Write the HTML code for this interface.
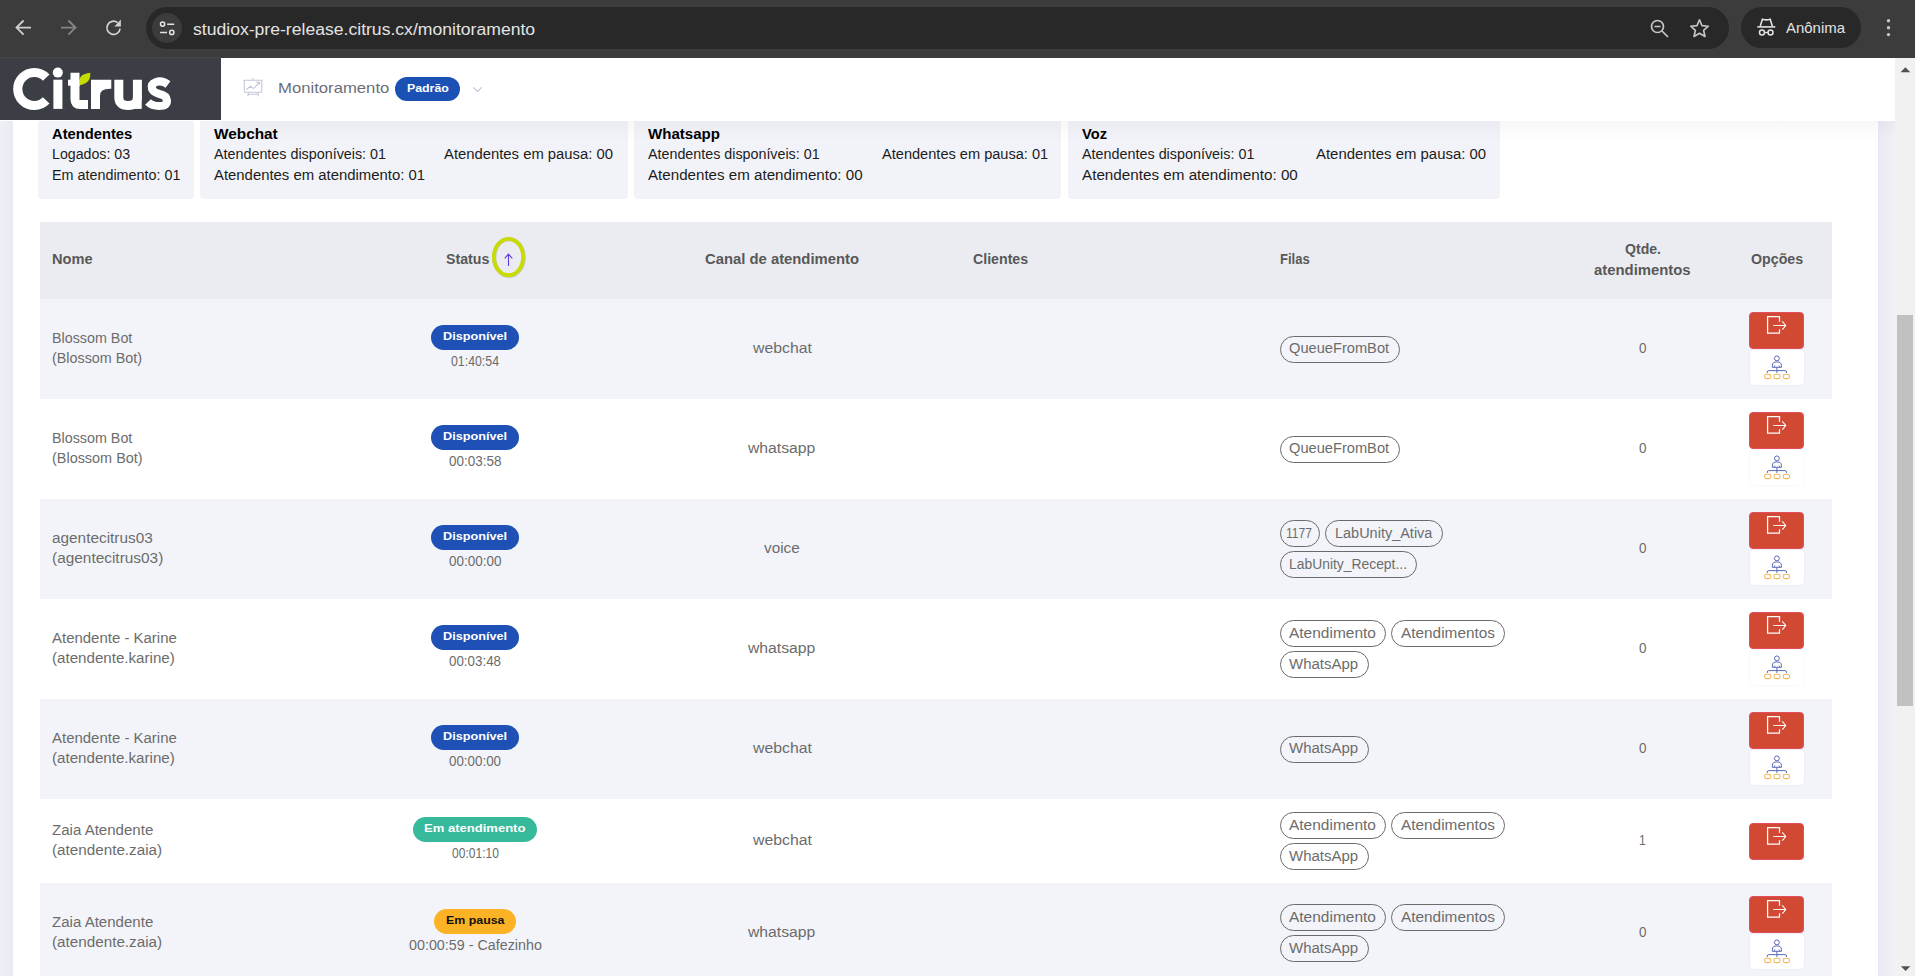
<!DOCTYPE html><html><head><meta charset="utf-8"><style>
*{margin:0;padding:0;box-sizing:border-box}
html,body{width:1915px;height:976px;overflow:hidden;background:#fff;font-family:"Liberation Sans",sans-serif}
body>div,#root div{position:absolute}
.t{white-space:nowrap;transform-origin:0 0}
svg{position:absolute;overflow:visible}

</style></head><body>
<div style="left:0px;top:58px;width:1895px;height:918px;background:#fff;"></div>
<div style="left:0px;top:121px;width:13px;height:855px;background:linear-gradient(90deg,#efeff7,#e9e9f3);"></div>
<div style="left:1878px;top:121px;width:17px;height:855px;background:linear-gradient(90deg,#e9e9f4,#f1f1f6);"></div>
<div style="left:38px;top:100px;width:156px;height:99px;background:#f2f3f8;border-radius:4px"></div>
<div style="left:200px;top:100px;width:428px;height:99px;background:#f2f3f8;border-radius:4px"></div>
<div style="left:634px;top:100px;width:427px;height:99px;background:#f2f3f8;border-radius:4px"></div>
<div style="left:1068px;top:100px;width:432px;height:99px;background:#f2f3f8;border-radius:4px"></div>
<div class="t" style="left:51.60px;top:127.30px;font-size:14px;line-height:14px;font-weight:700;color:#000;transform:scaleX(1.0521);">Atendentes</div>
<div class="t" style="left:51.60px;top:147.20px;font-size:14px;line-height:14px;font-weight:400;color:#1c1c1c;transform:scaleX(1.0134);">Logados: 03</div>
<div class="t" style="left:51.60px;top:168.30px;font-size:14px;line-height:14px;font-weight:400;color:#1c1c1c;transform:scaleX(1.0247);">Em atendimento: 01</div>
<div class="t" style="left:214.00px;top:127.30px;font-size:14px;line-height:14px;font-weight:700;color:#000;transform:scaleX(1.0966);">Webchat</div>
<div class="t" style="left:214.00px;top:147.20px;font-size:14px;line-height:14px;font-weight:400;color:#1c1c1c;transform:scaleX(1.0231);">Atendentes disponíveis: 01</div>
<div class="t" style="left:444.00px;top:147.20px;font-size:14px;line-height:14px;font-weight:400;color:#1c1c1c;transform:scaleX(1.0592);">Atendentes em pausa: 00</div>
<div class="t" style="left:214.00px;top:168.30px;font-size:14px;line-height:14px;font-weight:400;color:#1c1c1c;transform:scaleX(1.0632);">Atendentes em atendimento: 01</div>
<div class="t" style="left:648.40px;top:127.30px;font-size:14px;line-height:14px;font-weight:700;color:#000;transform:scaleX(1.0749);">Whatsapp</div>
<div class="t" style="left:648.40px;top:147.20px;font-size:14px;line-height:14px;font-weight:400;color:#1c1c1c;transform:scaleX(1.0207);">Atendentes disponíveis: 01</div>
<div class="t" style="left:881.60px;top:147.20px;font-size:14px;line-height:14px;font-weight:400;color:#1c1c1c;transform:scaleX(1.0416);">Atendentes em pausa: 01</div>
<div class="t" style="left:648.40px;top:168.30px;font-size:14px;line-height:14px;font-weight:400;color:#1c1c1c;transform:scaleX(1.0813);">Atendentes em atendimento: 00</div>
<div class="t" style="left:1081.60px;top:127.30px;font-size:14px;line-height:14px;font-weight:700;color:#000;transform:scaleX(1.0480);">Voz</div>
<div class="t" style="left:1081.60px;top:147.20px;font-size:14px;line-height:14px;font-weight:400;color:#1c1c1c;transform:scaleX(1.0255);">Atendentes disponíveis: 01</div>
<div class="t" style="left:1315.80px;top:147.20px;font-size:14px;line-height:14px;font-weight:400;color:#1c1c1c;transform:scaleX(1.0661);">Atendentes em pausa: 00</div>
<div class="t" style="left:1081.60px;top:168.30px;font-size:14px;line-height:14px;font-weight:400;color:#1c1c1c;transform:scaleX(1.0874);">Atendentes em atendimento: 00</div>
<div style="left:40px;top:222px;width:1792px;height:77px;background:#ebecf1;"></div>
<div class="t" style="left:51.60px;top:252.30px;font-size:14px;line-height:14px;font-weight:700;color:#585858;transform:scaleX(1.0439);">Nome</div>
<div class="t" style="left:445.70px;top:252.30px;font-size:14px;line-height:14px;font-weight:700;color:#585858;transform:scaleX(1.0121);">Status</div>
<div class="t" style="left:705.00px;top:252.30px;font-size:14px;line-height:14px;font-weight:700;color:#585858;transform:scaleX(1.0586);">Canal de atendimento</div>
<div class="t" style="left:972.60px;top:252.30px;font-size:14px;line-height:14px;font-weight:700;color:#585858;transform:scaleX(1.0118);">Clientes</div>
<div class="t" style="left:1280.00px;top:252.30px;font-size:14px;line-height:14px;font-weight:700;color:#585858;transform:scaleX(0.9340);">Filas</div>
<div class="t" style="left:1625.00px;top:241.70px;font-size:14px;line-height:14px;font-weight:700;color:#585858;transform:scaleX(1.0060);">Qtde.</div>
<div class="t" style="left:1594.40px;top:263.20px;font-size:14px;line-height:14px;font-weight:700;color:#585858;transform:scaleX(1.0614);">atendimentos</div>
<div class="t" style="left:1750.80px;top:251.70px;font-size:14px;line-height:14px;font-weight:700;color:#585858;transform:scaleX(1.0146);">Opções</div>
<svg style="left:490px;top:235px" width="38" height="44" viewBox="0 0 38 44"><ellipse cx="18.9" cy="22.4" rx="14.7" ry="18.3" fill="none" stroke="#6f7500" stroke-opacity=".28" stroke-width="4.4"/><ellipse cx="18.5" cy="22" rx="14.6" ry="18.2" fill="none" stroke="#c9dc00" stroke-width="3.7"/><path d="M18.5 31V19.5M14.7 23.3l3.8-4.2 3.8 4.2" fill="none" stroke="#5b3fd6" stroke-width="1.1"/></svg>
<div style="left:40px;top:299px;width:1792px;height:100px;background:#f3f4f9;"></div>
<div class="t" style="left:51.70px;top:331.00px;font-size:14px;line-height:14px;font-weight:400;color:#6c6c6c;transform:scaleX(1.0219);">Blossom Bot</div>
<div class="t" style="left:51.70px;top:351.00px;font-size:14px;line-height:14px;font-weight:400;color:#6c6c6c;transform:scaleX(1.0250);">(Blossom Bot)</div>
<div style="left:431px;top:325.0px;width:88px;height:25px;background:#1f50b5;border-radius:13px"></div>
<div class="t" style="left:443.00px;top:331.30px;font-size:11px;line-height:11px;font-weight:700;color:#fff;transform:scaleX(1.1505);">Disponível</div>
<div class="t" style="left:451.00px;top:354.40px;font-size:14px;line-height:14px;font-weight:400;color:#6c6c6c;transform:scaleX(0.8807);">01:40:54</div>
<div class="t" style="left:752.53px;top:340.70px;font-size:14px;line-height:14px;font-weight:400;color:#6c6c6c;transform:scaleX(1.1307);">webchat</div>
<div style="left:1280px;top:335.5px;width:120.0px;height:27px;border:1px solid #6a6a6a;border-radius:14px"></div>
<div class="t" style="left:1289.30px;top:341.00px;font-size:14px;line-height:14px;font-weight:400;color:#6c6c6c;transform:scaleX(1.0459);">QueueFromBot</div>
<div class="t" style="left:1639.30px;top:341.40px;font-size:14px;line-height:14px;font-weight:400;color:#6c6c6c;transform:scaleX(0.9635);">0</div>
<div style="left:1749px;top:312.0px;width:55px;height:37px;background:#d14933;border-radius:4px;border:1px solid #e24c5e"></div>
<svg style="left:1749px;top:312.0px" width="55" height="37" viewBox="0 0 55 37"><path d="M30.5 9.8V4.6H18.6V21.2H30.5V17.2" fill="none" stroke="#fff" stroke-width="1.25"/><path d="M24.3 13.5H36.6M33.2 9.3Q35.4 11.4 36.7 13.5Q35.4 15.6 33.2 17.7" fill="none" stroke="#fff" stroke-width="1.1"/></svg>
<div style="left:1750px;top:350.0px;width:54px;height:35px;background:#fff;border-radius:4px;box-shadow:0 0 1.5px rgba(0,0,0,.12)"></div>
<svg style="left:1750px;top:350.0px" width="54" height="35" viewBox="0 0 54 35"><circle cx="26.9" cy="8.4" r="2.45" fill="none" stroke="#5a69b6" stroke-width="1"/><path d="M22.4 17.3V15.2Q22.4 11.9 26.9 11.9Q31.4 11.9 31.4 15.2V17.3Z" fill="none" stroke="#5a69b6" stroke-width="1" stroke-linejoin="round"/><path d="M24 17.2L24.9 15.6M29.8 17.2L28.9 15.6" fill="none" stroke="#5a69b6" stroke-width="1"/><path d="M26.9 17.3V23M17.3 23V22.1Q17.3 20.6 18.8 20.6H35Q36.5 20.6 36.5 22.1V23" fill="none" stroke="#5a69b6" stroke-width="1"/><rect x="14.6" y="24.2" width="6.2" height="4.4" rx="1.9" fill="none" stroke="#f1b65a" stroke-width="1.05"/><rect x="23.9" y="24.2" width="6.2" height="4.4" rx="1.9" fill="none" stroke="#f1b65a" stroke-width="1.05"/><rect x="33.3" y="24.2" width="6.2" height="4.4" rx="1.9" fill="none" stroke="#f1b65a" stroke-width="1.05"/></svg>
<div class="t" style="left:51.70px;top:431.00px;font-size:14px;line-height:14px;font-weight:400;color:#6c6c6c;transform:scaleX(1.0219);">Blossom Bot</div>
<div class="t" style="left:51.70px;top:451.00px;font-size:14px;line-height:14px;font-weight:400;color:#6c6c6c;transform:scaleX(1.0306);">(Blossom Bot)</div>
<div style="left:431px;top:425.0px;width:88px;height:25px;background:#1f50b5;border-radius:13px"></div>
<div class="t" style="left:443.00px;top:431.30px;font-size:11px;line-height:11px;font-weight:700;color:#fff;transform:scaleX(1.1505);">Disponível</div>
<div class="t" style="left:448.60px;top:454.40px;font-size:14px;line-height:14px;font-weight:400;color:#6c6c6c;transform:scaleX(0.9614);">00:03:58</div>
<div class="t" style="left:748.03px;top:440.70px;font-size:14px;line-height:14px;font-weight:400;color:#6c6c6c;transform:scaleX(1.1240);">whatsapp</div>
<div style="left:1280px;top:435.5px;width:120.0px;height:27px;border:1px solid #6a6a6a;border-radius:14px"></div>
<div class="t" style="left:1289.30px;top:441.00px;font-size:14px;line-height:14px;font-weight:400;color:#6c6c6c;transform:scaleX(1.0459);">QueueFromBot</div>
<div class="t" style="left:1639.30px;top:441.40px;font-size:14px;line-height:14px;font-weight:400;color:#6c6c6c;transform:scaleX(0.9635);">0</div>
<div style="left:1749px;top:412.0px;width:55px;height:37px;background:#d14933;border-radius:4px;border:1px solid #e24c5e"></div>
<svg style="left:1749px;top:412.0px" width="55" height="37" viewBox="0 0 55 37"><path d="M30.5 9.8V4.6H18.6V21.2H30.5V17.2" fill="none" stroke="#fff" stroke-width="1.25"/><path d="M24.3 13.5H36.6M33.2 9.3Q35.4 11.4 36.7 13.5Q35.4 15.6 33.2 17.7" fill="none" stroke="#fff" stroke-width="1.1"/></svg>
<div style="left:1750px;top:450.0px;width:54px;height:35px;background:#fff;border-radius:4px;box-shadow:0 0 1.5px rgba(0,0,0,.12)"></div>
<svg style="left:1750px;top:450.0px" width="54" height="35" viewBox="0 0 54 35"><circle cx="26.9" cy="8.4" r="2.45" fill="none" stroke="#5a69b6" stroke-width="1"/><path d="M22.4 17.3V15.2Q22.4 11.9 26.9 11.9Q31.4 11.9 31.4 15.2V17.3Z" fill="none" stroke="#5a69b6" stroke-width="1" stroke-linejoin="round"/><path d="M24 17.2L24.9 15.6M29.8 17.2L28.9 15.6" fill="none" stroke="#5a69b6" stroke-width="1"/><path d="M26.9 17.3V23M17.3 23V22.1Q17.3 20.6 18.8 20.6H35Q36.5 20.6 36.5 22.1V23" fill="none" stroke="#5a69b6" stroke-width="1"/><rect x="14.6" y="24.2" width="6.2" height="4.4" rx="1.9" fill="none" stroke="#f1b65a" stroke-width="1.05"/><rect x="23.9" y="24.2" width="6.2" height="4.4" rx="1.9" fill="none" stroke="#f1b65a" stroke-width="1.05"/><rect x="33.3" y="24.2" width="6.2" height="4.4" rx="1.9" fill="none" stroke="#f1b65a" stroke-width="1.05"/></svg>
<div style="left:40px;top:499px;width:1792px;height:100px;background:#f3f4f9;"></div>
<div class="t" style="left:51.70px;top:531.00px;font-size:14px;line-height:14px;font-weight:400;color:#6c6c6c;transform:scaleX(1.0965);">agentecitrus03</div>
<div class="t" style="left:51.70px;top:551.00px;font-size:14px;line-height:14px;font-weight:400;color:#6c6c6c;transform:scaleX(1.1002);">(agentecitrus03)</div>
<div style="left:431px;top:525.0px;width:88px;height:25px;background:#1f50b5;border-radius:13px"></div>
<div class="t" style="left:443.00px;top:531.30px;font-size:11px;line-height:11px;font-weight:700;color:#fff;transform:scaleX(1.1505);">Disponível</div>
<div class="t" style="left:448.80px;top:554.40px;font-size:14px;line-height:14px;font-weight:400;color:#6c6c6c;transform:scaleX(0.9633);">00:00:00</div>
<div class="t" style="left:764.00px;top:540.70px;font-size:14px;line-height:14px;font-weight:400;color:#6c6c6c;transform:scaleX(1.0956);">voice</div>
<div style="left:1280px;top:520.0px;width:39.8px;height:27px;border:1px solid #6a6a6a;border-radius:14px"></div>
<div class="t" style="left:1286.31px;top:525.50px;font-size:14px;line-height:14px;font-weight:400;color:#6c6c6c;transform:scaleX(0.8600);">1177</div>
<div style="left:1325px;top:520.0px;width:118.0px;height:27px;border:1px solid #6a6a6a;border-radius:14px"></div>
<div class="t" style="left:1334.80px;top:525.50px;font-size:14px;line-height:14px;font-weight:400;color:#6c6c6c;transform:scaleX(1.0342);">LabUnity_Ativa</div>
<div style="left:1280px;top:551.0px;width:136.6px;height:27px;border:1px solid #6a6a6a;border-radius:14px"></div>
<div class="t" style="left:1289.00px;top:556.50px;font-size:14px;line-height:14px;font-weight:400;color:#6c6c6c;transform:scaleX(0.9910);">LabUnity_Recept...</div>
<div class="t" style="left:1639.30px;top:541.40px;font-size:14px;line-height:14px;font-weight:400;color:#6c6c6c;transform:scaleX(0.9635);">0</div>
<div style="left:1749px;top:512.0px;width:55px;height:37px;background:#d14933;border-radius:4px;border:1px solid #e24c5e"></div>
<svg style="left:1749px;top:512.0px" width="55" height="37" viewBox="0 0 55 37"><path d="M30.5 9.8V4.6H18.6V21.2H30.5V17.2" fill="none" stroke="#fff" stroke-width="1.25"/><path d="M24.3 13.5H36.6M33.2 9.3Q35.4 11.4 36.7 13.5Q35.4 15.6 33.2 17.7" fill="none" stroke="#fff" stroke-width="1.1"/></svg>
<div style="left:1750px;top:550.0px;width:54px;height:35px;background:#fff;border-radius:4px;box-shadow:0 0 1.5px rgba(0,0,0,.12)"></div>
<svg style="left:1750px;top:550.0px" width="54" height="35" viewBox="0 0 54 35"><circle cx="26.9" cy="8.4" r="2.45" fill="none" stroke="#5a69b6" stroke-width="1"/><path d="M22.4 17.3V15.2Q22.4 11.9 26.9 11.9Q31.4 11.9 31.4 15.2V17.3Z" fill="none" stroke="#5a69b6" stroke-width="1" stroke-linejoin="round"/><path d="M24 17.2L24.9 15.6M29.8 17.2L28.9 15.6" fill="none" stroke="#5a69b6" stroke-width="1"/><path d="M26.9 17.3V23M17.3 23V22.1Q17.3 20.6 18.8 20.6H35Q36.5 20.6 36.5 22.1V23" fill="none" stroke="#5a69b6" stroke-width="1"/><rect x="14.6" y="24.2" width="6.2" height="4.4" rx="1.9" fill="none" stroke="#f1b65a" stroke-width="1.05"/><rect x="23.9" y="24.2" width="6.2" height="4.4" rx="1.9" fill="none" stroke="#f1b65a" stroke-width="1.05"/><rect x="33.3" y="24.2" width="6.2" height="4.4" rx="1.9" fill="none" stroke="#f1b65a" stroke-width="1.05"/></svg>
<div class="t" style="left:51.70px;top:631.00px;font-size:14px;line-height:14px;font-weight:400;color:#6c6c6c;transform:scaleX(1.0690);">Atendente - Karine</div>
<div class="t" style="left:51.70px;top:651.00px;font-size:14px;line-height:14px;font-weight:400;color:#6c6c6c;transform:scaleX(1.0808);">(atendente.karine)</div>
<div style="left:431px;top:625.0px;width:88px;height:25px;background:#1f50b5;border-radius:13px"></div>
<div class="t" style="left:443.00px;top:631.30px;font-size:11px;line-height:11px;font-weight:700;color:#fff;transform:scaleX(1.1505);">Disponível</div>
<div class="t" style="left:449.00px;top:654.40px;font-size:14px;line-height:14px;font-weight:400;color:#6c6c6c;transform:scaleX(0.9541);">00:03:48</div>
<div class="t" style="left:748.03px;top:640.70px;font-size:14px;line-height:14px;font-weight:400;color:#6c6c6c;transform:scaleX(1.1240);">whatsapp</div>
<div style="left:1280px;top:620.0px;width:106.3px;height:27px;border:1px solid #6a6a6a;border-radius:14px"></div>
<div class="t" style="left:1289.40px;top:625.50px;font-size:14px;line-height:14px;font-weight:400;color:#6c6c6c;transform:scaleX(1.1055);">Atendimento</div>
<div style="left:1391.3px;top:620.0px;width:113.3px;height:27px;border:1px solid #6a6a6a;border-radius:14px"></div>
<div class="t" style="left:1401.00px;top:625.50px;font-size:14px;line-height:14px;font-weight:400;color:#6c6c6c;transform:scaleX(1.0980);">Atendimentos</div>
<div style="left:1280px;top:651.0px;width:88.6px;height:27px;border:1px solid #6a6a6a;border-radius:14px"></div>
<div class="t" style="left:1289.40px;top:656.50px;font-size:14px;line-height:14px;font-weight:400;color:#6c6c6c;transform:scaleX(1.0715);">WhatsApp</div>
<div class="t" style="left:1639.30px;top:641.40px;font-size:14px;line-height:14px;font-weight:400;color:#6c6c6c;transform:scaleX(0.9635);">0</div>
<div style="left:1749px;top:612.0px;width:55px;height:37px;background:#d14933;border-radius:4px;border:1px solid #e24c5e"></div>
<svg style="left:1749px;top:612.0px" width="55" height="37" viewBox="0 0 55 37"><path d="M30.5 9.8V4.6H18.6V21.2H30.5V17.2" fill="none" stroke="#fff" stroke-width="1.25"/><path d="M24.3 13.5H36.6M33.2 9.3Q35.4 11.4 36.7 13.5Q35.4 15.6 33.2 17.7" fill="none" stroke="#fff" stroke-width="1.1"/></svg>
<div style="left:1750px;top:650.0px;width:54px;height:35px;background:#fff;border-radius:4px;box-shadow:0 0 1.5px rgba(0,0,0,.12)"></div>
<svg style="left:1750px;top:650.0px" width="54" height="35" viewBox="0 0 54 35"><circle cx="26.9" cy="8.4" r="2.45" fill="none" stroke="#5a69b6" stroke-width="1"/><path d="M22.4 17.3V15.2Q22.4 11.9 26.9 11.9Q31.4 11.9 31.4 15.2V17.3Z" fill="none" stroke="#5a69b6" stroke-width="1" stroke-linejoin="round"/><path d="M24 17.2L24.9 15.6M29.8 17.2L28.9 15.6" fill="none" stroke="#5a69b6" stroke-width="1"/><path d="M26.9 17.3V23M17.3 23V22.1Q17.3 20.6 18.8 20.6H35Q36.5 20.6 36.5 22.1V23" fill="none" stroke="#5a69b6" stroke-width="1"/><rect x="14.6" y="24.2" width="6.2" height="4.4" rx="1.9" fill="none" stroke="#f1b65a" stroke-width="1.05"/><rect x="23.9" y="24.2" width="6.2" height="4.4" rx="1.9" fill="none" stroke="#f1b65a" stroke-width="1.05"/><rect x="33.3" y="24.2" width="6.2" height="4.4" rx="1.9" fill="none" stroke="#f1b65a" stroke-width="1.05"/></svg>
<div style="left:40px;top:699px;width:1792px;height:100px;background:#f3f4f9;"></div>
<div class="t" style="left:51.70px;top:731.00px;font-size:14px;line-height:14px;font-weight:400;color:#6c6c6c;transform:scaleX(1.0690);">Atendente - Karine</div>
<div class="t" style="left:51.70px;top:751.00px;font-size:14px;line-height:14px;font-weight:400;color:#6c6c6c;transform:scaleX(1.0808);">(atendente.karine)</div>
<div style="left:431px;top:725.0px;width:88px;height:25px;background:#1f50b5;border-radius:13px"></div>
<div class="t" style="left:443.00px;top:731.30px;font-size:11px;line-height:11px;font-weight:700;color:#fff;transform:scaleX(1.1505);">Disponível</div>
<div class="t" style="left:449.00px;top:754.40px;font-size:14px;line-height:14px;font-weight:400;color:#6c6c6c;transform:scaleX(0.9541);">00:00:00</div>
<div class="t" style="left:752.53px;top:740.70px;font-size:14px;line-height:14px;font-weight:400;color:#6c6c6c;transform:scaleX(1.1307);">webchat</div>
<div style="left:1280px;top:735.5px;width:88.6px;height:27px;border:1px solid #6a6a6a;border-radius:14px"></div>
<div class="t" style="left:1289.40px;top:741.00px;font-size:14px;line-height:14px;font-weight:400;color:#6c6c6c;transform:scaleX(1.0715);">WhatsApp</div>
<div class="t" style="left:1639.30px;top:741.40px;font-size:14px;line-height:14px;font-weight:400;color:#6c6c6c;transform:scaleX(0.9635);">0</div>
<div style="left:1749px;top:712.0px;width:55px;height:37px;background:#d14933;border-radius:4px;border:1px solid #e24c5e"></div>
<svg style="left:1749px;top:712.0px" width="55" height="37" viewBox="0 0 55 37"><path d="M30.5 9.8V4.6H18.6V21.2H30.5V17.2" fill="none" stroke="#fff" stroke-width="1.25"/><path d="M24.3 13.5H36.6M33.2 9.3Q35.4 11.4 36.7 13.5Q35.4 15.6 33.2 17.7" fill="none" stroke="#fff" stroke-width="1.1"/></svg>
<div style="left:1750px;top:750.0px;width:54px;height:35px;background:#fff;border-radius:4px;box-shadow:0 0 1.5px rgba(0,0,0,.12)"></div>
<svg style="left:1750px;top:750.0px" width="54" height="35" viewBox="0 0 54 35"><circle cx="26.9" cy="8.4" r="2.45" fill="none" stroke="#5a69b6" stroke-width="1"/><path d="M22.4 17.3V15.2Q22.4 11.9 26.9 11.9Q31.4 11.9 31.4 15.2V17.3Z" fill="none" stroke="#5a69b6" stroke-width="1" stroke-linejoin="round"/><path d="M24 17.2L24.9 15.6M29.8 17.2L28.9 15.6" fill="none" stroke="#5a69b6" stroke-width="1"/><path d="M26.9 17.3V23M17.3 23V22.1Q17.3 20.6 18.8 20.6H35Q36.5 20.6 36.5 22.1V23" fill="none" stroke="#5a69b6" stroke-width="1"/><rect x="14.6" y="24.2" width="6.2" height="4.4" rx="1.9" fill="none" stroke="#f1b65a" stroke-width="1.05"/><rect x="23.9" y="24.2" width="6.2" height="4.4" rx="1.9" fill="none" stroke="#f1b65a" stroke-width="1.05"/><rect x="33.3" y="24.2" width="6.2" height="4.4" rx="1.9" fill="none" stroke="#f1b65a" stroke-width="1.05"/></svg>
<div class="t" style="left:51.70px;top:823.00px;font-size:14px;line-height:14px;font-weight:400;color:#6c6c6c;transform:scaleX(1.0755);">Zaia Atendente</div>
<div class="t" style="left:51.70px;top:843.00px;font-size:14px;line-height:14px;font-weight:400;color:#6c6c6c;transform:scaleX(1.0882);">(atendente.zaia)</div>
<div style="left:413px;top:817.0px;width:124px;height:25px;background:#36ba9b;border-radius:13px"></div>
<div class="t" style="left:424.30px;top:823.30px;font-size:11px;line-height:11px;font-weight:700;color:#fff;transform:scaleX(1.1850);">Em atendimento</div>
<div class="t" style="left:451.71px;top:846.40px;font-size:14px;line-height:14px;font-weight:400;color:#6c6c6c;transform:scaleX(0.8600);">00:01:10</div>
<div class="t" style="left:752.53px;top:832.70px;font-size:14px;line-height:14px;font-weight:400;color:#6c6c6c;transform:scaleX(1.1307);">webchat</div>
<div style="left:1280px;top:812.0px;width:106.3px;height:27px;border:1px solid #6a6a6a;border-radius:14px"></div>
<div class="t" style="left:1289.40px;top:817.50px;font-size:14px;line-height:14px;font-weight:400;color:#6c6c6c;transform:scaleX(1.1055);">Atendimento</div>
<div style="left:1391.3px;top:812.0px;width:113.3px;height:27px;border:1px solid #6a6a6a;border-radius:14px"></div>
<div class="t" style="left:1401.00px;top:817.50px;font-size:14px;line-height:14px;font-weight:400;color:#6c6c6c;transform:scaleX(1.0980);">Atendimentos</div>
<div style="left:1280px;top:843.0px;width:88.6px;height:27px;border:1px solid #6a6a6a;border-radius:14px"></div>
<div class="t" style="left:1289.40px;top:848.50px;font-size:14px;line-height:14px;font-weight:400;color:#6c6c6c;transform:scaleX(1.0715);">WhatsApp</div>
<div class="t" style="left:1639.40px;top:833.40px;font-size:14px;line-height:14px;font-weight:400;color:#6c6c6c;transform:scaleX(0.8600);">1</div>
<div style="left:1749px;top:822.5px;width:55px;height:37px;background:#d14933;border-radius:4px;border:1px solid #e24c5e"></div>
<svg style="left:1749px;top:822.5px" width="55" height="37" viewBox="0 0 55 37"><path d="M30.5 9.8V4.6H18.6V21.2H30.5V17.2" fill="none" stroke="#fff" stroke-width="1.25"/><path d="M24.3 13.5H36.6M33.2 9.3Q35.4 11.4 36.7 13.5Q35.4 15.6 33.2 17.7" fill="none" stroke="#fff" stroke-width="1.1"/></svg>
<div style="left:40px;top:883px;width:1792px;height:100px;background:#f3f4f9;"></div>
<div class="t" style="left:51.70px;top:915.00px;font-size:14px;line-height:14px;font-weight:400;color:#6c6c6c;transform:scaleX(1.0755);">Zaia Atendente</div>
<div class="t" style="left:51.70px;top:935.00px;font-size:14px;line-height:14px;font-weight:400;color:#6c6c6c;transform:scaleX(1.0882);">(atendente.zaia)</div>
<div style="left:434px;top:909.0px;width:82px;height:25px;background:#fbb325;border-radius:13px"></div>
<div class="t" style="left:445.60px;top:915.30px;font-size:11px;line-height:11px;font-weight:700;color:#111;transform:scaleX(1.1260);">Em pausa</div>
<div class="t" style="left:408.50px;top:938.40px;font-size:14px;line-height:14px;font-weight:400;color:#6c6c6c;transform:scaleX(1.0225);">00:00:59 - Cafezinho</div>
<div class="t" style="left:748.03px;top:924.70px;font-size:14px;line-height:14px;font-weight:400;color:#6c6c6c;transform:scaleX(1.1240);">whatsapp</div>
<div style="left:1280px;top:904.0px;width:106.3px;height:27px;border:1px solid #6a6a6a;border-radius:14px"></div>
<div class="t" style="left:1289.40px;top:909.50px;font-size:14px;line-height:14px;font-weight:400;color:#6c6c6c;transform:scaleX(1.1055);">Atendimento</div>
<div style="left:1391.3px;top:904.0px;width:113.3px;height:27px;border:1px solid #6a6a6a;border-radius:14px"></div>
<div class="t" style="left:1401.00px;top:909.50px;font-size:14px;line-height:14px;font-weight:400;color:#6c6c6c;transform:scaleX(1.0980);">Atendimentos</div>
<div style="left:1280px;top:935.0px;width:88.6px;height:27px;border:1px solid #6a6a6a;border-radius:14px"></div>
<div class="t" style="left:1289.40px;top:940.50px;font-size:14px;line-height:14px;font-weight:400;color:#6c6c6c;transform:scaleX(1.0715);">WhatsApp</div>
<div class="t" style="left:1639.30px;top:925.40px;font-size:14px;line-height:14px;font-weight:400;color:#6c6c6c;transform:scaleX(0.9635);">0</div>
<div style="left:1749px;top:896.0px;width:55px;height:37px;background:#d14933;border-radius:4px;border:1px solid #e24c5e"></div>
<svg style="left:1749px;top:896.0px" width="55" height="37" viewBox="0 0 55 37"><path d="M30.5 9.8V4.6H18.6V21.2H30.5V17.2" fill="none" stroke="#fff" stroke-width="1.25"/><path d="M24.3 13.5H36.6M33.2 9.3Q35.4 11.4 36.7 13.5Q35.4 15.6 33.2 17.7" fill="none" stroke="#fff" stroke-width="1.1"/></svg>
<div style="left:1750px;top:934.0px;width:54px;height:35px;background:#fff;border-radius:4px;box-shadow:0 0 1.5px rgba(0,0,0,.12)"></div>
<svg style="left:1750px;top:934.0px" width="54" height="35" viewBox="0 0 54 35"><circle cx="26.9" cy="8.4" r="2.45" fill="none" stroke="#5a69b6" stroke-width="1"/><path d="M22.4 17.3V15.2Q22.4 11.9 26.9 11.9Q31.4 11.9 31.4 15.2V17.3Z" fill="none" stroke="#5a69b6" stroke-width="1" stroke-linejoin="round"/><path d="M24 17.2L24.9 15.6M29.8 17.2L28.9 15.6" fill="none" stroke="#5a69b6" stroke-width="1"/><path d="M26.9 17.3V23M17.3 23V22.1Q17.3 20.6 18.8 20.6H35Q36.5 20.6 36.5 22.1V23" fill="none" stroke="#5a69b6" stroke-width="1"/><rect x="14.6" y="24.2" width="6.2" height="4.4" rx="1.9" fill="none" stroke="#f1b65a" stroke-width="1.05"/><rect x="23.9" y="24.2" width="6.2" height="4.4" rx="1.9" fill="none" stroke="#f1b65a" stroke-width="1.05"/><rect x="33.3" y="24.2" width="6.2" height="4.4" rx="1.9" fill="none" stroke="#f1b65a" stroke-width="1.05"/></svg>
<div style="left:0px;top:58px;width:1895px;height:62px;background:#fff;"></div>
<div style="left:0;top:120px;width:1895px;height:1px;background:#fff"></div>
<div style="left:221px;top:121px;width:1674px;height:20px;background:linear-gradient(rgba(40,40,90,.035),rgba(40,40,90,0))"></div>
<div style="left:0px;top:58px;width:221px;height:62px;background:#3b3e44;"></div>
<svg style="left:0;top:58px" width="221" height="62" viewBox="0 58 221 62"><path d="M46.2 77.6A16.5 16.5 0 1 0 46.2 100.4" fill="none" stroke="#fff" stroke-width="9.2"/><rect x="53.4" y="79.7" width="9" height="29.2" fill="#fff"/><circle cx="57.8" cy="72.6" r="5" fill="#fff"/><path d="M75 72.7V99.5Q75 104.5 80 104.5H88" fill="none" stroke="#fff" stroke-width="9"/><rect x="68" y="79.7" width="12" height="6" fill="#fff"/><path d="M91 79.7H111.3V88.8Q105 88.6 102 90.8Q100 92.5 100 96V108.9H91Z" fill="#fff"/><path d="M118.8 79.7V97Q118.8 105.5 128 105.5Q137.4 105.5 137.4 97V79.7" fill="none" stroke="#fff" stroke-width="9"/><rect x="133" y="95" width="8.7" height="13.9" fill="#fff"/><path d="M168 84.5Q162 80 156 82Q150.5 84 152 89Q153.5 92.5 159.5 94Q166.5 95.5 167 100.5Q167 106 159 106Q152 106 148 102" fill="none" stroke="#fff" stroke-width="8"/><path d="M79.5 85.2Q78 77 83.5 74.5Q87.5 72.8 90.3 72.7Q90.8 80 86 83Q82.5 85 79.5 85.2Z" fill="#c6dc00"/></svg>
<svg style="left:243px;top:77px" width="21" height="21" viewBox="0 0 21 21"><path d="M0.2 3.3H19.7M9.9 1.1V3.3M1.3 3.3V14.3Q1.3 15.3 2.3 15.3H17.7Q18.7 15.3 18.7 14.3V3.3M5.5 17.3H14.7M5.5 15.6L4.8 19.3M14.8 15.6L15.4 19.3" fill="none" stroke="#c3c8d7" stroke-width="1.1"/><path d="M3.5 12.5L7.3 9.3L10.4 11.6L16.5 5.5M13.1 5.3H16.5V7.4" fill="none" stroke="#c3c8d7" stroke-width="1.1"/></svg>
<div class="t" style="left:277.70px;top:80.75px;font-size:14.5px;line-height:14.5px;font-weight:400;color:#6b6e78;transform:scaleX(1.1508);">Monitoramento</div>
<div style="left:395px;top:77px;width:65px;height:24px;background:#1b50b5;border-radius:12px"></div>
<div class="t" style="left:406.60px;top:83.25px;font-size:11.5px;line-height:11.5px;font-weight:700;color:#fff;transform:scaleX(1.0722);">Padrão</div>
<svg style="left:470px;top:84px" width="14" height="10" viewBox="0 0 14 10"><path d="M3.4 3.4L7.5 7.5L11.6 3.4" fill="none" stroke="#bcc2d4" stroke-width="1.1"/></svg>
<div style="left:1895px;top:58px;width:20px;height:918px;background:#f1f1f1;"></div>
<div style="left:1897px;top:315px;width:16px;height:391px;background:#c1c1c1;"></div>
<svg style="left:1895px;top:58px" width="20" height="918" viewBox="0 0 20 918"><path d="M5.5 14.3L10.4 9.3L15.3 14.3Z" fill="#505050"/><path d="M5.9 908.2L15.3 908.2L10.6 912.9Z" fill="#505050"/></svg>
<div style="left:0px;top:0px;width:1915px;height:58px;background:#3c3c3c;"></div>
<div style="left:146px;top:7px;width:1583px;height:42px;background:#282828;border-radius:21px"></div>
<div style="left:152px;top:13px;width:30px;height:30px;background:#3c3c3c;border-radius:15px"></div>
<div style="left:1741px;top:7px;width:120px;height:41px;background:#282828;border-radius:21px"></div>
<svg style="left:0;top:0" width="1915" height="58" viewBox="0 0 1915 58"><path d="M31 27.6H16.4M23.6 20.5L16.5 27.6L23.6 34.6" fill="none" stroke="#d0d0d0" stroke-width="1.8"/><path d="M61 27.6H75.5M68.4 20.5L75.5 27.6L68.4 34.6" fill="none" stroke="#858585" stroke-width="1.8"/><path d="M120.1 28.6A6.6 6.6 0 1 1 117.6 22.6" fill="none" stroke="#d2d2d2" stroke-width="1.7"/><path d="M120.9 19.6V26.5H114.4Z" fill="#d2d2d2"/><circle cx="162.6" cy="24.1" r="2.1" fill="none" stroke="#e3e3e3" stroke-width="1.5"/><path d="M167.2 24.2H174.2M160.1 32.4H167" fill="none" stroke="#e3e3e3" stroke-width="1.5"/><circle cx="171.8" cy="32.4" r="2.1" fill="none" stroke="#e3e3e3" stroke-width="1.5"/><circle cx="1657.5" cy="26.5" r="6" fill="none" stroke="#c7c7c7" stroke-width="1.7"/><path d="M1654.5 26.5H1660.5M1662 31L1668 37" fill="none" stroke="#c7c7c7" stroke-width="1.7"/><path d="M1699.5 19.8L1702 25.6L1708.3 26.2L1703.6 30.3L1705 36.5L1699.5 33.3L1694 36.5L1695.4 30.3L1690.7 26.2L1697 25.6Z" fill="none" stroke="#c7c7c7" stroke-width="1.6" stroke-linejoin="round"/><path d="M1757.3 26.9H1775.3" fill="none" stroke="#e3e3e3" stroke-width="1.6"/><path d="M1760.3 26L1762.4 19.2Q1766.3 20.6 1770.2 19.2L1772.3 26" fill="none" stroke="#e3e3e3" stroke-width="1.6"/><circle cx="1762" cy="32.5" r="2.5" fill="none" stroke="#e3e3e3" stroke-width="1.5"/><circle cx="1770.5" cy="32.5" r="2.5" fill="none" stroke="#e3e3e3" stroke-width="1.5"/><path d="M1764.5 32.5H1768" fill="none" stroke="#e3e3e3" stroke-width="1.3"/><circle cx="1888.5" cy="20.8" r="1.7" fill="#c7c7c7"/><circle cx="1888.5" cy="27.7" r="1.7" fill="#c7c7c7"/><circle cx="1888.5" cy="34.6" r="1.7" fill="#c7c7c7"/></svg>
<div style="left:0px;top:57px;width:221px;height:1px;background:#444647;"></div>
<div class="t" style="left:192.60px;top:21.50px;font-size:16px;line-height:16px;font-weight:400;color:#e3e3e3;transform:scaleX(1.0992);">studiox-pre-release.citrus.cx/monitoramento</div>
<div class="t" style="left:1786.00px;top:20.55px;font-size:14.5px;line-height:14.5px;font-weight:400;color:#e3e3e3;transform:scaleX(1.0306);">Anônima</div>
</body></html>
